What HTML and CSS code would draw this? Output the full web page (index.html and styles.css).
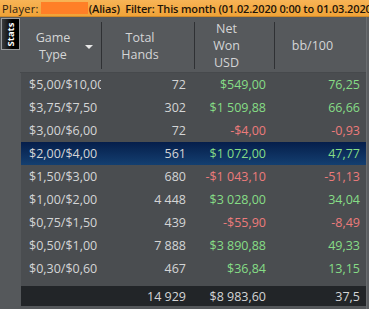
FILE: index.html
```html
<!DOCTYPE html>
<html>
<head>
<meta charset="utf-8">
<link rel="stylesheet" href="styles.css">
</head>
<body>
<div class="topbar">
  <span class="lbl">Player:</span><span class="redact"></span><span class="strong">(Alias)&nbsp;&nbsp;Filter: This month (01.02.2020 0:00 to 01.03.2020 0:00)</span>
</div>
<div class="main">
  <div class="side">
    <div class="tab"><span>Stats</span></div>
  </div>
  <div class="grid">
    <div class="head">
      <div class="hcell c1"><div class="htxt">Game<br>Type</div><div class="sort"><span class="arrow"></span></div></div>
      <div class="hcell c2"><div class="htxt">Total<br>Hands</div><div class="sort"></div></div>
      <div class="hcell c3"><div class="htxt">Net<br>Won<br>USD</div><div class="sort"></div></div>
      <div class="hcell c4"><div class="htxt">bb/100</div><div class="sort"></div></div>
    </div>
    <div class="body">
      <div class="row"><div class="c1 t">$5,00/$10,00</div><div class="c2 n">72</div><div class="c3 n pos">$549,00</div><div class="c4 n pos">76,25</div></div>
      <div class="row"><div class="c1 t">$3,75/$7,50</div><div class="c2 n">302</div><div class="c3 n pos">$1 509,88</div><div class="c4 n pos">66,66</div></div>
      <div class="row"><div class="c1 t">$3,00/$6,00</div><div class="c2 n">72</div><div class="c3 n neg">-$4,00</div><div class="c4 n neg">-0,93</div></div>
      <div class="row sel"><div class="c1 t">$2,00/$4,00</div><div class="c2 n">561</div><div class="c3 n pos">$1 072,00</div><div class="c4 n pos">47,77</div></div>
      <div class="row"><div class="c1 t">$1,50/$3,00</div><div class="c2 n">680</div><div class="c3 n neg">-$1 043,10</div><div class="c4 n neg">-51,13</div></div>
      <div class="row"><div class="c1 t">$1,00/$2,00</div><div class="c2 n">4 448</div><div class="c3 n pos">$3 028,00</div><div class="c4 n pos">34,04</div></div>
      <div class="row"><div class="c1 t">$0,75/$1,50</div><div class="c2 n">439</div><div class="c3 n neg">-$55,90</div><div class="c4 n neg">-8,49</div></div>
      <div class="row"><div class="c1 t">$0,50/$1,00</div><div class="c2 n">7 888</div><div class="c3 n pos">$3 890,88</div><div class="c4 n pos">49,33</div></div>
      <div class="row"><div class="c1 t">$0,30/$0,60</div><div class="c2 n">467</div><div class="c3 n pos">$36,84</div><div class="c4 n pos">13,15</div></div>
    </div>
    <div class="total">
      <div class="c1 t"></div><div class="c2 n">14 929</div><div class="c3 n">$8 983,60</div><div class="c4 n">37,5</div>
    </div>
  </div>
  <div class="rside"></div>
</div>
</body>
</html>
```
FILE: styles.css
```css
* { box-sizing: border-box; }
html, body { margin: 0; padding: 0; }
body {
  width: 369px;
  height: 309px;
  overflow: hidden;
  background: #55585b;
  font-family: "Open Sans", "Noto Sans", sans-serif;
}
.topbar {
  height: 17px;
  background: linear-gradient(#f8b456, #f0a338);
  border-bottom: 1px solid #d08a2a;
  display: flex;
  align-items: center;
  padding-left: 2px;
  font-size: 11px;
  color: #2b2010;
  white-space: nowrap;
  overflow: hidden;
}
.topbar > span { flex-shrink: 0; }
.lbl { letter-spacing: 0.3px; }
.redact {
  display: inline-block;
  width: 47px;
  height: 12px;
  background: #ff7f27;
  margin-left: 2px;
  margin-right: 1px;
}
.strong { font-weight: 600; color: #1e1408; letter-spacing: -0.15px; }
.main {
  display: flex;
  height: 292px;
}
.side {
  width: 21px;
  padding-top: 1px;
  padding-left: 1px;
}
.tab {
  width: 19px;
  height: 32px;
  border: 1px solid #9a9c9e;
  background: linear-gradient(90deg, #3a3c3e, #000 60%);
  display: flex;
  align-items: center;
  justify-content: center;
  overflow: hidden;
}
.tab span {
  transform: rotate(-90deg);
  color: #fff;
  font-size: 9.5px;
  font-weight: 700;
  white-space: nowrap;
}
.grid {
  width: 345px;
  display: flex;
  flex-direction: column;
}
.rside {
  flex: 1;
  background: #5b5e61;
  border-left: 1px solid #6a6d70;
}
.c1 { width: 80px; flex-shrink: 0; }
.c2 { width: 93px; flex-shrink: 0; }
.c3 { width: 80px; flex-shrink: 0; }
.c4 { width: 92px; flex-shrink: 0; }
.head {
  height: 56px;
  background: #56595c;
  display: flex;
  border-bottom: 1px solid #46494c;
  margin-left: -1px;
}
.hcell {
  display: flex;
  align-items: center;
  border-left: 1px solid #2f3134;
  margin: 5px 0 3px 0;
  color: #d4d5d6;
  font-size: 12.5px;
  line-height: 17px;
}
.hcell.c1 { border-left-color: transparent; width: 81px; }
.htxt { flex: 1; text-align: center; }
.sort {
  width: 16px;
  display: flex;
  align-items: center;
  justify-content: flex-start;
}
.arrow {
  width: 0; height: 0;
  border-left: 4px solid transparent;
  border-right: 4px solid transparent;
  border-top: 4px solid #e8e8e8;
  margin-top: 2px;
}
.body {
  background: #4a4d50;
  padding-bottom: 6px;
}
.row {
  display: flex;
  height: 23px;
  align-items: center;
  color: #d4d5d6;
  font-size: 12.5px;
}
.row.sel {
  background: linear-gradient(#051e4b, #143f70);
}
.t {
  padding-left: 8px;
  white-space: nowrap;
  overflow: hidden;
}
.n {
  text-align: right;
  padding-right: 8px;
  white-space: nowrap;
}
.c4.n { padding-right: 6px; }
.pos { color: #86dd86; }
.neg { color: #ec7b7b; }
.total {
  display: flex;
  height: 20px;
  align-items: center;
  background: #222528;
  color: #d4d5d6;
  font-size: 12.5px;
}
```
